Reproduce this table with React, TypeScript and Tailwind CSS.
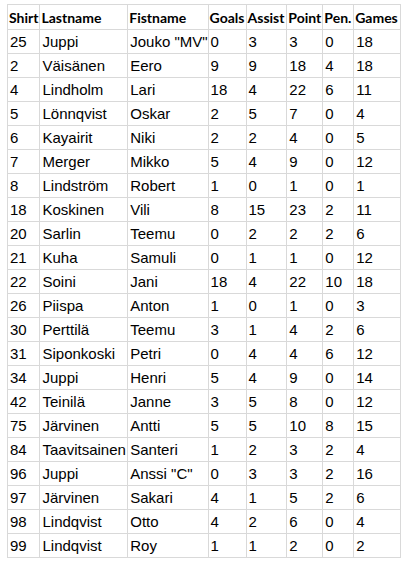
import React from 'react'

const rows: (string | number)[][] = [
  [25, 'Juppi', 'Jouko "MV"', 0, 3, 3, 0, 18],
  [2, 'Väisänen', 'Eero', 9, 9, 18, 4, 18],
  [4, 'Lindholm', 'Lari', 18, 4, 22, 6, 11],
  [5, 'Lönnqvist', 'Oskar', 2, 5, 7, 0, 4],
  [6, 'Kayairit', 'Niki', 2, 2, 4, 0, 5],
  [7, 'Merger', 'Mikko', 5, 4, 9, 0, 12],
  [8, 'Lindström', 'Robert', 1, 0, 1, 0, 1],
  [18, 'Koskinen', 'Vili', 8, 15, 23, 2, 11],
  [20, 'Sarlin', 'Teemu', 0, 2, 2, 2, 6],
  [21, 'Kuha', 'Samuli', 0, 1, 1, 0, 12],
  [22, 'Soini', 'Jani', 18, 4, 22, 10, 18],
  [26, 'Piispa', 'Anton', 1, 0, 1, 0, 3],
  [30, 'Perttilä', 'Teemu', 3, 1, 4, 2, 6],
  [31, 'Siponkoski', 'Petri', 0, 4, 4, 6, 12],
  [34, 'Juppi', 'Henri', 5, 4, 9, 0, 14],
  [42, 'Teinilä', 'Janne', 3, 5, 8, 0, 12],
  [75, 'Järvinen', 'Antti', 5, 5, 10, 8, 15],
  [84, 'Taavitsainen', 'Santeri', 1, 2, 3, 2, 4],
  [96, 'Juppi', 'Anssi "C"', 0, 3, 3, 2, 16],
  [97, 'Järvinen', 'Sakari', 4, 1, 5, 2, 6],
  [98, 'Lindqvist', 'Otto', 4, 2, 6, 0, 4],
  [99, 'Lindqvist', 'Roy', 1, 1, 2, 0, 2],
]

const headers = ['Shirt', 'Lastname', 'Fistname', 'Goals', 'Assist', 'Point', 'Pen.', 'Games']
const widths = ['w-[31px]', 'w-[88px]', 'w-[80px]', 'w-[38px]', 'w-[41px]', 'w-[34px]', 'w-[31px]', 'w-[47px]']

export default function App() {
  return (
    <div className="bg-white w-[401px] h-[561px] pt-[4px] pl-[7px] overflow-hidden">
      <table className="table-fixed border-collapse text-black">
        <colgroup>
          {widths.map((w, i) => (
            <col key={i} className={w} />
          ))}
        </colgroup>
        <thead>
          <tr className="h-[25px]">
            {headers.map((h) => (
              <th
                key={h}
                className="border border-[#d9d9d9] px-[1px] text-left align-middle whitespace-nowrap font-bold text-[14px] font-['Lato',sans-serif]"
              >
                {h}
              </th>
            ))}
          </tr>
        </thead>
        <tbody>
          {rows.map((r, i) => (
            <tr key={i} className="h-[24px]">
              {r.map((c, j) => (
                <td
                  key={j}
                  className="border border-[#d9d9d9] pl-[2px] pr-0 align-middle whitespace-nowrap text-[15px] leading-none font-['Liberation_Sans',Arial,sans-serif] overflow-visible"
                >
                  {c}
                </td>
              ))}
            </tr>
          ))}
        </tbody>
      </table>
    </div>
  )
}
